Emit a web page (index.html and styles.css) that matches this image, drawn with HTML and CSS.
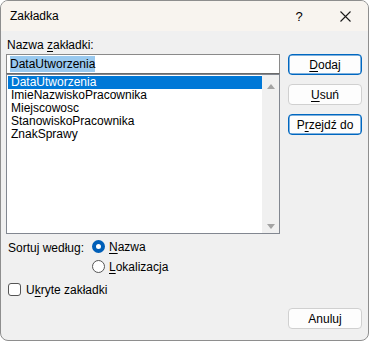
FILE: index.html
```html
<!DOCTYPE html>
<html lang="pl">
<head>
    <meta charset="UTF-8">
    <title>Zakładka</title>
    <link rel="stylesheet" href="styles.css">
</head>
<body>
    <div class="okno">
        <div class="pasek-tytulu">
            <span class="tytul">Zakładka</span>
            <span class="pomoc">?</span>
            <span class="zamknij">
                <svg width="11" height="11" viewBox="0 0 11 11">
                    <path d="M0.5 0.5 L10.5 10.5 M10.5 0.5 L0.5 10.5" stroke="#1a1a1a" stroke-width="1.1" fill="none"/>
                </svg>
            </span>
        </div>

        <div class="tresc">
            <div class="glowna">
                <div class="lewa">
                    <div class="etykieta">Nazwa <u>z</u>akładki:</div>
                    <div class="pole"><span class="zaznaczony-tekst">DataUtworzenia</span></div>
                    <div class="lista">
                        <div class="pozycje">
                            <div class="pozycja wybrana">DataUtworzenia</div>
                            <div class="pozycja">ImieNazwiskoPracownika</div>
                            <div class="pozycja">Miejscowosc</div>
                            <div class="pozycja">StanowiskoPracownika</div>
                            <div class="pozycja">ZnakSprawy</div>
                        </div>
                        <div class="przewijanie">
                            <span class="strzalka-gora"></span>
                            <span class="strzalka-dol"></span>
                        </div>
                    </div>
                </div>
                <div class="przyciski">
                    <button class="przycisk domyslny"><u>D</u>odaj</button>
                    <button class="przycisk"><u>U</u>suń</button>
                    <button class="przycisk domyslny">P<u>r</u>zejdź do</button>
                </div>
            </div>

            <div class="sortowanie">
                <div class="sortuj-etykieta">Sortuj według:</div>
                <div class="opcje">
                    <div class="opcja"><span class="radio zaznaczone"></span><u>N</u>azwa</div>
                    <div class="opcja"><span class="radio"></span><u>L</u>okalizacja</div>
                </div>
            </div>

            <div class="ukryte">
                <span class="checkbox"></span>U<u>k</u>ryte zakładki
            </div>

            <div class="stopka">
                <button class="przycisk">Anuluj</button>
            </div>
        </div>
    </div>
</body>
</html>
```

FILE: styles.css
```css
body {
    margin: 0;
    padding: 0;
    background-color: #ffffff;
    font-family: "Liberation Sans", Arial, sans-serif;
    font-size: 12px;
    color: #000;
}

u {
    text-decoration: underline;
    text-underline-offset: 2px;
}

.okno {
    width: 367px;
    height: 339px;
    border: 1px solid #8e8e8e;
    border-radius: 8px;
    overflow: hidden;
    background-color: #f0f0f0;
    display: flex;
    flex-direction: column;
}

.pasek-tytulu {
    height: 30px;
    background-color: #f8f4ef;
    display: flex;
    align-items: center;
    padding-left: 9px;
}

.tytul {
    flex: 1;
    font-size: 12px;
}

.pomoc {
    width: 46px;
    text-align: center;
    font-size: 13px;
}

.zamknij {
    width: 46px;
    display: flex;
    justify-content: center;
}

.tresc {
    flex: 1;
    display: flex;
    flex-direction: column;
    padding: 6px 6px 0 5px;
}

.glowna {
    display: flex;
}

.lewa {
    width: 274px;
}

.etykieta {
    height: 16px;
    line-height: 16px;
    padding-left: 1px;
    margin-bottom: 1px;
}

.pole {
    height: 18px;
    border: 1px solid #8a8a8a;
    border-bottom-color: #6a6a6a;
    background: #fff;
    display: flex;
    align-items: center;
    padding-left: 3px;
}

.zaznaczony-tekst {
    background-color: #99c9ef;
    line-height: 16px;
}

.lista {
    height: 157px;
    border: 1px solid #828790;
    background: #fff;
    display: flex;
    padding: 1px 0 0 1px;
}

.pozycje {
    flex: 1;
}

.pozycja {
    height: 13px;
    line-height: 13px;
    padding-left: 3px;
    white-space: nowrap;
}

.pozycja.wybrana {
    background-color: #0078d7;
    color: #fff;
}

.przewijanie {
    width: 17px;
    margin-top: -1px;
    background-color: #f0f0f0;
    display: flex;
    flex-direction: column;
    justify-content: space-between;
    align-items: center;
    padding: 9px 0 4px;
}

.strzalka-gora {
    width: 0;
    height: 0;
    border-left: 4px solid transparent;
    border-right: 4px solid transparent;
    border-bottom: 5px solid #a3a3a3;
}

.strzalka-dol {
    width: 0;
    height: 0;
    border-left: 4px solid transparent;
    border-right: 4px solid transparent;
    border-top: 5px solid #a3a3a3;
}

.przyciski {
    margin-left: 8px;
    padding-top: 17px;
    display: flex;
    flex-direction: column;
    gap: 9px;
}

.przycisk {
    width: 74px;
    height: 21px;
    font-family: "Liberation Sans", Arial, sans-serif;
    font-size: 12px;
    color: #000;
    background-color: #fdfdfd;
    border: 1px solid #d0d0d0;
    border-radius: 4px;
    padding: 0;
}

.przycisk.domyslny {
    border: 1px solid #0067c0;
    box-shadow: inset 0 0 0 0.5px #0067c0;
}

.sortowanie {
    display: flex;
    margin-top: 4px;
}

.sortuj-etykieta {
    width: 84px;
    padding-left: 2px;
    line-height: 14px;
    margin-top: 3px;
}

.opcje {
    display: flex;
    flex-direction: column;
    gap: 7px;
    margin-top: 2px;
}

.opcja {
    display: flex;
    align-items: center;
    height: 13px;
}

.radio {
    width: 11px;
    height: 11px;
    border: 1px solid #555;
    border-radius: 50%;
    margin-right: 4px;
    background: #fff;
}

.radio.zaznaczone {
    width: 5px;
    height: 5px;
    border: 4px solid #005fb8;
}

.ukryte {
    display: flex;
    align-items: center;
    margin-top: 10px;
    padding-left: 2px;
    height: 13px;
}

.checkbox {
    width: 11px;
    height: 11px;
    border: 1px solid #555;
    border-radius: 3px;
    margin-right: 5px;
    background: #fff;
}

.stopka {
    display: flex;
    justify-content: flex-end;
    margin-top: 12px;
    padding-right: 0;
}
```
